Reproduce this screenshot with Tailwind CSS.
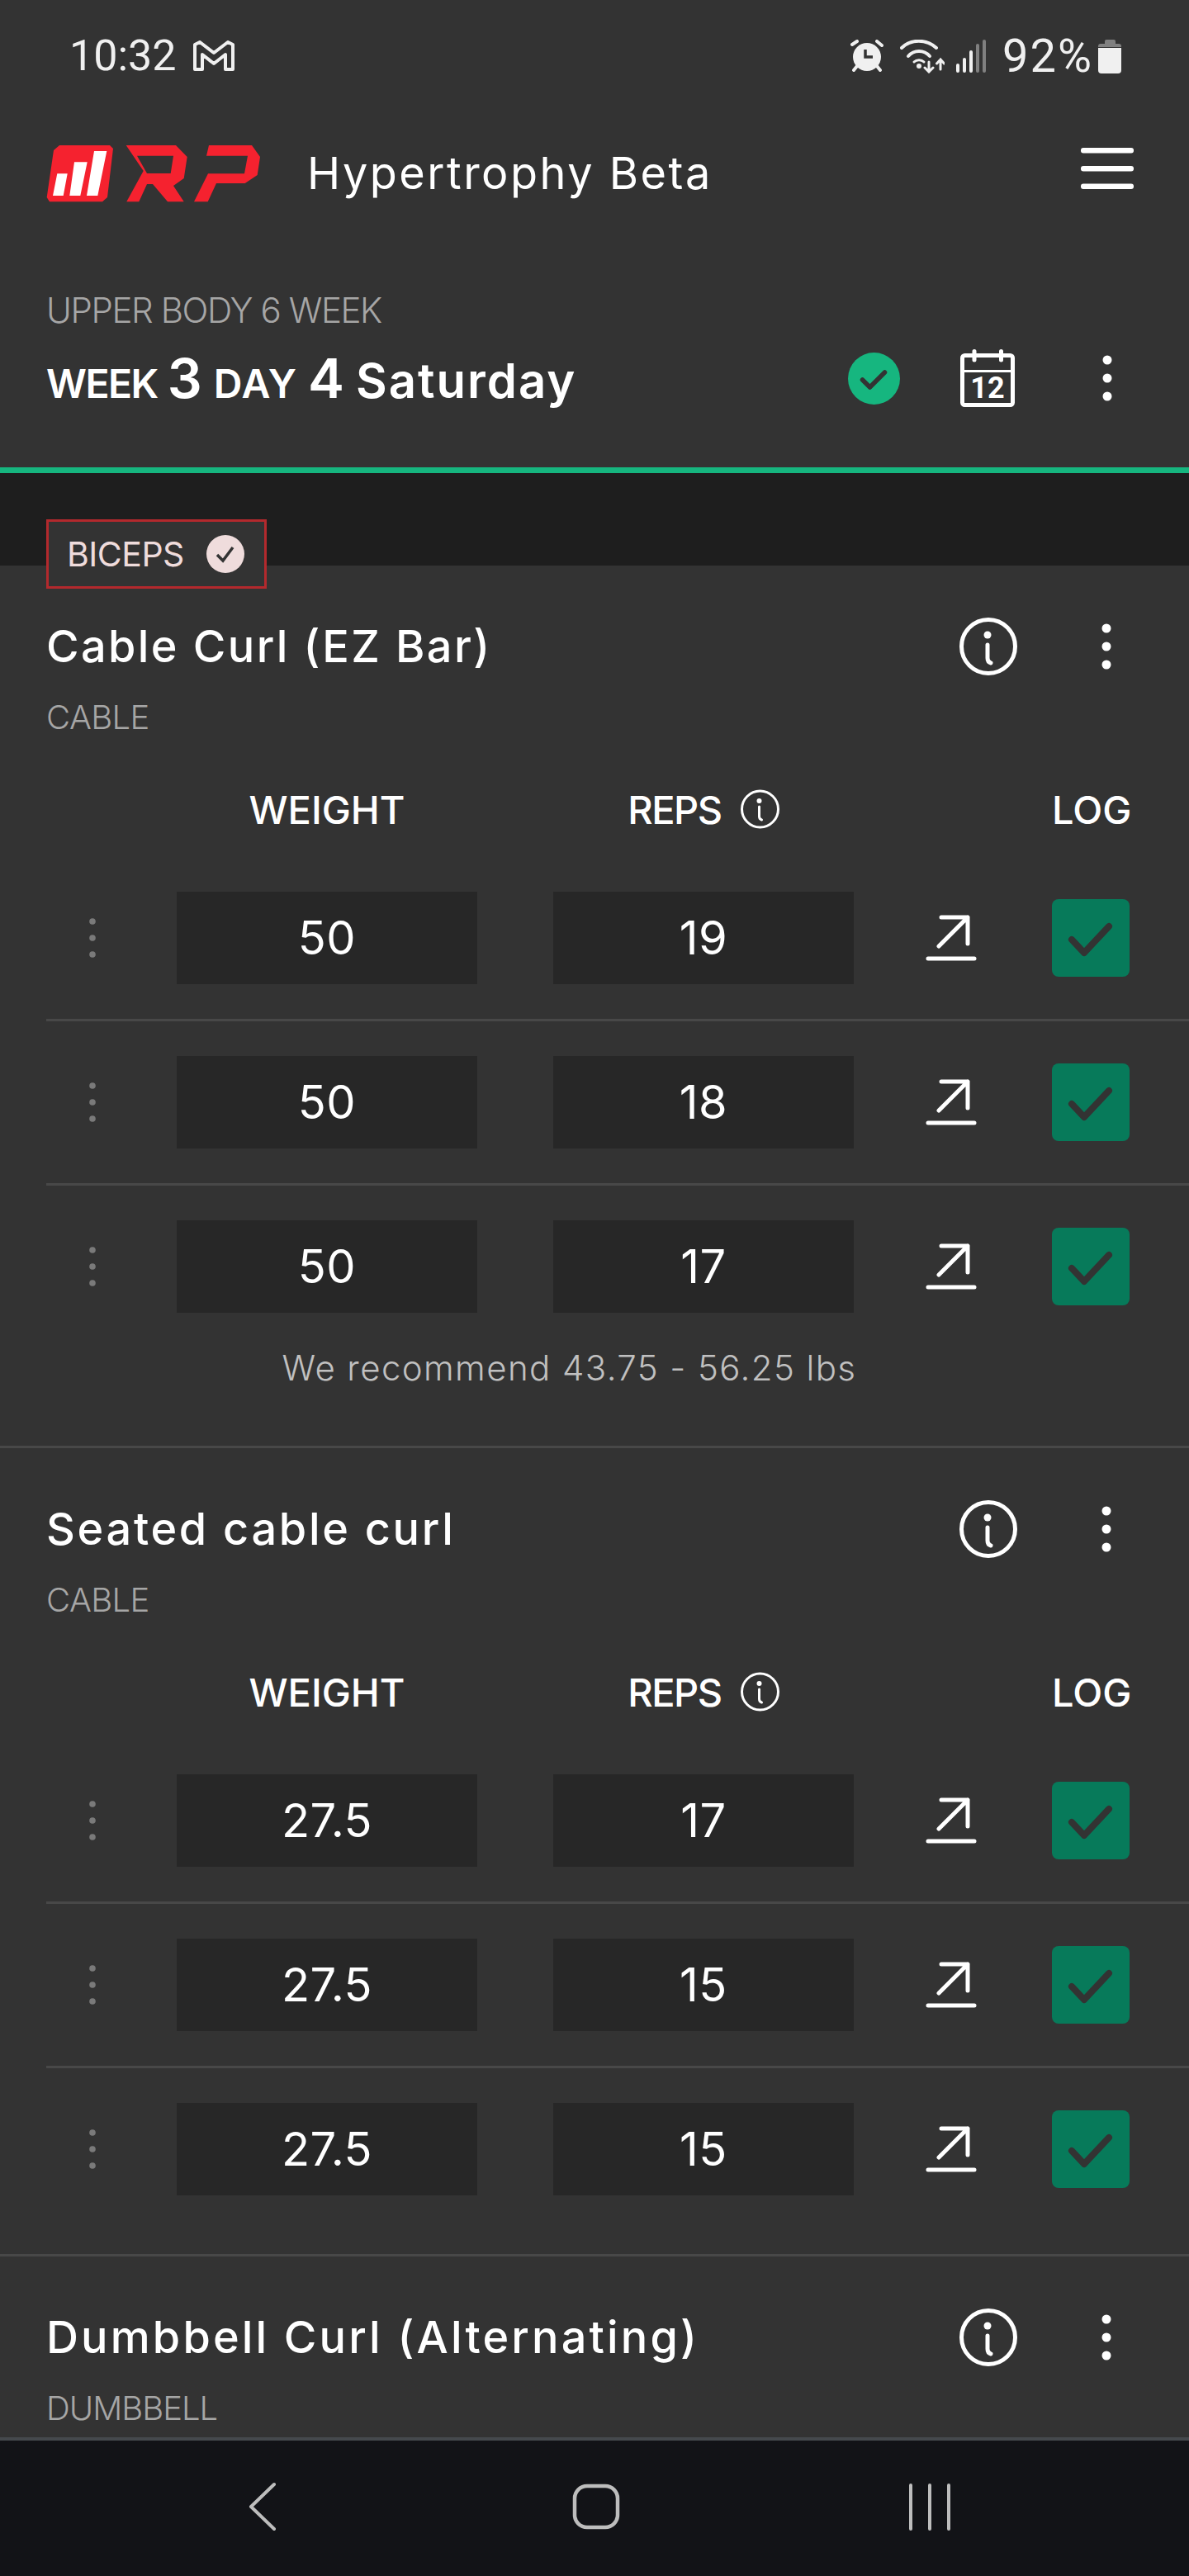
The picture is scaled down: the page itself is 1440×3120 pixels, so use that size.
<!DOCTYPE html>
<html lang="en">
<head>
  <meta charset="UTF-8" />
  <meta name="viewport" content="width=device-width, initial-scale=1" />
  <title>RP Hypertrophy Beta</title>
  <script src="https://cdn.jsdelivr.net/npm/@tailwindcss/browser@4"></script>
</head>
<body class="bg-[#333333] font-['Inter',sans-serif] text-white">

<!-- shared icons -->
<svg class="hidden">
  <symbol id="dots" viewBox="0 0 12 56"><circle cx="6" cy="6" r="5.5" fill="#fff"/><circle cx="6" cy="28" r="5.5" fill="#fff"/><circle cx="6" cy="50" r="5.5" fill="#fff"/></symbol>
  <symbol id="info" viewBox="0 0 70 70"><circle cx="35" cy="35" r="32.5" fill="none" stroke="#fff" stroke-width="5"/><circle cx="34" cy="21" r="4.5" fill="#fff"/><path d="M34 33 V49 Q34 54 38 55" fill="none" stroke="#fff" stroke-width="5" stroke-linecap="round"/></symbol>
  <symbol id="info-small" viewBox="0 0 47 48"><circle cx="23.5" cy="24" r="22" fill="none" stroke="#fff" stroke-width="3"/><circle cx="22.5" cy="14" r="3" fill="#fff"/><path d="M22.5 21 V33 Q22.500 36 25.500 37" fill="none" stroke="#fff" stroke-width="3" stroke-linecap="round"/></symbol>
  <symbol id="drag" viewBox="0 0 8 48"><circle cx="4" cy="4" r="3.800" fill="#7a7a7a"/><circle cx="4" cy="24" r="3.800" fill="#7a7a7a"/><circle cx="4" cy="44" r="3.800" fill="#7a7a7a"/></symbol>
  <symbol id="share" viewBox="0 0 62 56"><path d="M19 3 H51 V35 M51 3 L16 38 M3 53 H59" fill="none" stroke="#fff" stroke-width="5" stroke-linecap="round" stroke-linejoin="round"/></symbol>
  <symbol id="tick" viewBox="0 0 94 94"><path d="M24 49 L39 65 L69 33" fill="none" stroke="#333" stroke-width="8" stroke-linecap="round" stroke-linejoin="round"/></symbol>
</svg>

<div class="flex h-[3120px] w-[1440px] flex-col overflow-hidden bg-[#333333]">
  <main class="relative min-h-0 flex-1 overflow-hidden">

    <!-- status bar -->
    <div class="flex h-[136px] items-center justify-between pl-[84px] pr-[82px] text-[#f0f0f0]">
      <div class="flex items-center gap-[20px]">
        <span class="font-['Roboto',sans-serif] text-[52px] leading-none">10:32</span>
        <svg class="h-[38px] w-[50px]" viewBox="0 0 50 38" fill="none" stroke="currentColor" stroke-width="4" stroke-linejoin="round"><path d="M2 5 V35 H11 V17 L25 28 L39 17 V35 H48 V5 L42 2 L25 15 L8 2 Z"/></svg>
      </div>
      <div class="flex items-center">
        <svg class="h-[40px] w-[40px]" viewBox="0 0 40 40" fill="#f0f0f0"><circle cx="20" cy="21" r="17"/><path d="M2 6 L8 2 M32 2 L38 7 M4 37 L8 32 M36 37 L32 32" stroke="#f0f0f0" stroke-width="4" stroke-linecap="round"/><path d="M18 12 V21 H27" fill="none" stroke="#333" stroke-width="3.500"/></svg>
        <svg class="ml-[20px] h-[41px] w-[54px]" viewBox="0 0 54 41" fill="none" stroke="#f0f0f0" stroke-width="4" stroke-linecap="round"><path d="M2 10 C13 -1 32 -1 44 10"/><path d="M10 20 C17 12 29 12 36 20"/><path d="M17 27 C20 24 26 24 29 27" stroke-width="3"/><circle cx="23" cy="32" r="3" fill="#f0f0f0" stroke="none"/><path d="M35 27 V39 M30 34 L35 39 L40 34 M49 36 V24 M44.500 29 L49 24 L53.500 29" stroke-width="3"/></svg>
        <svg class="ml-[14px] h-[41px] w-[36px]" viewBox="0 0 36 41" fill="none" stroke-width="4" stroke-linecap="round"><path d="M2 38 V31 M10 38 V24 M18 38 V15" stroke="#f0f0f0"/><path d="M26 38 V7 M34 38 V2" stroke="#808080"/></svg>
        <span class="ml-[20px] font-['Roboto',sans-serif] text-[56px] leading-none tracking-[2px]">92%</span>
        <svg class="ml-[6px] h-[41px] w-[28px]" viewBox="0 0 28 41" fill="#f0f0f0"><path d="M8 2 A2 2 0 0 1 10 0 H19 A2 2 0 0 1 21 2 V5 H25 A3 3 0 0 1 28 8 V9 H0 V8 A3 3 0 0 1 3 5 H8 Z" fill="#808080"/><path d="M0 10 H28 V37 A4 4 0 0 1 24 41 H4 A4 4 0 0 1 0 37 Z"/></svg>
      </div>
    </div>

    <!-- app header -->
    <div class="flex h-[148px] items-center justify-between pl-[56px] pr-[67px]">
      <div class="flex items-center">
        <svg class="h-[70px] w-[260px]" viewBox="0 0 260 70" fill="#f5222f">
          <path d="M16 1 H77 L81 5 L74 64 L68 69.300 H4 L0.700 64 L9 7 Z"/>
          <path d="M13.300 35.300 H25.700 L20.700 62 H8 Z M34 21.300 H49.700 L41.300 62 H28.300 Z M58 8 H73.300 L62.300 62 H49 Z" fill="#fff"/>
          <path fill-rule="evenodd" d="M96.700 1 H157 L170.700 15 L166.700 41 L154 50 L166.700 69.300 H147 L129 48 H122 L112.300 69.300 H97.300 L117.700 32 Z M110 13.700 L122 35 H150.700 L154 13.700 Z"/>
          <path d="M197 1 H249 L259 15 L255.700 37 L240.700 47 H206 L195.700 69.300 H179 L196 35.300 H240 L244 13.700 H194 Z"/>
        </svg>
        <span class="ml-[56px] text-[54px] leading-none tracking-[2.500px]">Hypertrophy Beta</span>
      </div>
      <svg class="mb-[13px] h-[50px] w-[64px]" viewBox="0 0 64 50" fill="#fff"><rect width="64" height="6.500" y="0" rx="3"/><rect width="64" height="6.500" y="22" rx="3"/><rect width="64" height="6.500" y="43.500" rx="3"/></svg>
    </div>

    <!-- workout heading -->
    <div class="flex h-[282px] items-start justify-between pl-[56px] pr-[93px]">
      <div class="pt-[67px]">
        <div class="text-[42px] font-light leading-[50px] tracking-[-1.400px] text-[#a6a6a6]">UPPER BODY 6 WEEK</div>
        <div class="mt-[24px] flex items-baseline font-semibold leading-none">
          <span class="text-[48px] tracking-[-1.500px]">WEEK</span><span class="ml-[12px] text-[66px]">3</span><span class="ml-[14px] text-[48px] tracking-[1px]">DAY</span><span class="ml-[13px] text-[66px]">4</span><span class="ml-[14px] text-[58px] tracking-[2px]">Saturday</span>
        </div>
      </div>
      <div class="flex items-center pt-[139px]">
        <svg class="h-[63px] w-[63px]" viewBox="0 0 63 63"><circle cx="31.500" cy="31.500" r="31.500" fill="#16b67f"/><path d="M17.500 33 L26.500 42 L44.500 24" fill="none" stroke="#333" stroke-width="5.500" stroke-linecap="round" stroke-linejoin="round"/></svg>
        <svg class="ml-[73px] h-[70px] w-[66px]" viewBox="0 0 66 70" fill="none" stroke="#fff"><rect x="2.500" y="7.500" width="61" height="60" rx="3" stroke-width="5"/><path d="M2 26.500 H64" stroke-width="3"/><path d="M17 2.500 V13 M49.500 2.500 V13" stroke-width="5" stroke-linecap="round"/><text x="33" y="59" text-anchor="middle" font-family="Roboto, sans-serif" font-weight="700" font-size="36" fill="#fff" stroke="none">12</text></svg>
        <svg class="ml-[106px] h-[56px] w-[12px]"><use href="#dots"/></svg>
      </div>
    </div>

    <div class="h-[7px] bg-[#16b67f]"></div>
    <div class="h-[112px] bg-[#1e1e1e]"></div>

    <!-- muscle group badge -->
    <div class="absolute left-[56px] top-[629px] flex h-[84px] w-[267px] items-center border-[3px] border-[#b3292d] bg-[#333333] pl-[22px]">
      <span class="text-[41px] leading-none tracking-[-0.500px] text-[#efdcdc]">BICEPS</span>
      <svg class="ml-[27px] h-[46px] w-[46px]" viewBox="0 0 46 46"><circle cx="23" cy="23" r="23" fill="#efdcdc"/><path d="M13 24 L20 31 L32 15" fill="none" stroke="#333" stroke-width="3.500"/></svg>
    </div>

    <!-- cable curl -->
    <section class="border-b-[3px] border-[#484848] pb-[69px] pt-[62px]">
      <div class="flex h-[72px] items-center justify-between pl-[56px] pr-[94px]">
        <span class="text-[54px] font-medium leading-none tracking-[2.400px]">Cable Curl (EZ Bar)</span>
        <div class="flex items-center gap-[102px]">
          <svg class="h-[70px] w-[70px]"><use href="#info"/></svg>
          <svg class="h-[56px] w-[12px]"><use href="#dots"/></svg>
        </div>
      </div>
      <div class="mt-[25px] pl-[56px] text-[40px] font-light leading-[50px] tracking-[-0.600px] text-[#a6a6a6]">CABLE</div>
      <div class="mt-[56px] grid h-[60px] grid-cols-[158px_364px_92px_364px_240px_94px] items-center pl-[56px] text-[47px] font-medium leading-none">
        <span></span><span class="text-center">WEIGHT</span><span></span>
        <span class="flex items-center justify-center gap-[23px] tracking-[-1.500px]">REPS<svg class="h-[48px] w-[47px]"><use href="#info-small"/></svg></span>
        <span></span><span class="text-center">LOG</span>
      </div>
      <div class="mt-[28px]">
        <div class="ml-[56px] grid h-[199px] grid-cols-[158px_364px_92px_364px_240px_94px] items-center border-b-[3px] border-[#484848]">
          <svg class="ml-[52px] h-[48px] w-[8px]"><use href="#drag"/></svg>
          <div class="flex h-[112px] items-center justify-center bg-[#272727] text-[56px] leading-none tracking-[0.500px]">50</div><span></span>
          <div class="flex h-[112px] items-center justify-center bg-[#272727] text-[56px] leading-none tracking-[0.500px]">19</div>
          <svg class="ml-[87px] h-[56px] w-[62px]"><use href="#share"/></svg>
          <div class="h-[94px] rounded-[8px] bg-[#077a5a]"><svg class="h-[94px] w-[94px]"><use href="#tick"/></svg></div>
        </div>
        <div class="ml-[56px] grid h-[199px] grid-cols-[158px_364px_92px_364px_240px_94px] items-center border-b-[3px] border-[#484848]">
          <svg class="ml-[52px] h-[48px] w-[8px]"><use href="#drag"/></svg>
          <div class="flex h-[112px] items-center justify-center bg-[#272727] text-[56px] leading-none tracking-[0.500px]">50</div><span></span>
          <div class="flex h-[112px] items-center justify-center bg-[#272727] text-[56px] leading-none tracking-[0.500px]">18</div>
          <svg class="ml-[87px] h-[56px] w-[62px]"><use href="#share"/></svg>
          <div class="h-[94px] rounded-[8px] bg-[#077a5a]"><svg class="h-[94px] w-[94px]"><use href="#tick"/></svg></div>
        </div>
        <div class="ml-[56px] grid h-[196px] grid-cols-[158px_364px_92px_364px_240px_94px] items-center">
          <svg class="ml-[52px] h-[48px] w-[8px]"><use href="#drag"/></svg>
          <div class="flex h-[112px] items-center justify-center bg-[#272727] text-[56px] leading-none tracking-[0.500px]">50</div><span></span>
          <div class="flex h-[112px] items-center justify-center bg-[#272727] text-[56px] leading-none tracking-[0.500px]">17</div>
          <svg class="ml-[87px] h-[56px] w-[62px]"><use href="#share"/></svg>
          <div class="h-[94px] rounded-[8px] bg-[#077a5a]"><svg class="h-[94px] w-[94px]"><use href="#tick"/></svg></div>
        </div>
      </div>
      <div class="pr-[61px] text-center text-[42px] font-light leading-[50px] tracking-[1.400px] text-[#c0c0c0]">We recommend 43.75 - 56.25 lbs</div>
    </section>

    <!-- seated cable curl -->
    <section class="border-b-[3px] border-[#484848] pb-[29px] pt-[62px]">
      <div class="flex h-[72px] items-center justify-between pl-[56px] pr-[94px]">
        <span class="text-[54px] font-medium leading-none tracking-[2.700px]">Seated cable curl</span>
        <div class="flex items-center gap-[102px]">
          <svg class="h-[70px] w-[70px]"><use href="#info"/></svg>
          <svg class="h-[56px] w-[12px]"><use href="#dots"/></svg>
        </div>
      </div>
      <div class="mt-[25px] pl-[56px] text-[40px] font-light leading-[50px] tracking-[-0.600px] text-[#a6a6a6]">CABLE</div>
      <div class="mt-[56px] grid h-[60px] grid-cols-[158px_364px_92px_364px_240px_94px] items-center pl-[56px] text-[47px] font-medium leading-none">
        <span></span><span class="text-center">WEIGHT</span><span></span>
        <span class="flex items-center justify-center gap-[23px] tracking-[-1.500px]">REPS<svg class="h-[48px] w-[47px]"><use href="#info-small"/></svg></span>
        <span></span><span class="text-center">LOG</span>
      </div>
      <div class="mt-[28px]">
        <div class="ml-[56px] grid h-[199px] grid-cols-[158px_364px_92px_364px_240px_94px] items-center border-b-[3px] border-[#484848]">
          <svg class="ml-[52px] h-[48px] w-[8px]"><use href="#drag"/></svg>
          <div class="flex h-[112px] items-center justify-center bg-[#272727] text-[56px] leading-none tracking-[0.500px]">27.5</div><span></span>
          <div class="flex h-[112px] items-center justify-center bg-[#272727] text-[56px] leading-none tracking-[0.500px]">17</div>
          <svg class="ml-[87px] h-[56px] w-[62px]"><use href="#share"/></svg>
          <div class="h-[94px] rounded-[8px] bg-[#077a5a]"><svg class="h-[94px] w-[94px]"><use href="#tick"/></svg></div>
        </div>
        <div class="ml-[56px] grid h-[199px] grid-cols-[158px_364px_92px_364px_240px_94px] items-center border-b-[3px] border-[#484848]">
          <svg class="ml-[52px] h-[48px] w-[8px]"><use href="#drag"/></svg>
          <div class="flex h-[112px] items-center justify-center bg-[#272727] text-[56px] leading-none tracking-[0.500px]">27.5</div><span></span>
          <div class="flex h-[112px] items-center justify-center bg-[#272727] text-[56px] leading-none tracking-[0.500px]">15</div>
          <svg class="ml-[87px] h-[56px] w-[62px]"><use href="#share"/></svg>
          <div class="h-[94px] rounded-[8px] bg-[#077a5a]"><svg class="h-[94px] w-[94px]"><use href="#tick"/></svg></div>
        </div>
        <div class="ml-[56px] grid h-[196px] grid-cols-[158px_364px_92px_364px_240px_94px] items-center">
          <svg class="ml-[52px] h-[48px] w-[8px]"><use href="#drag"/></svg>
          <div class="flex h-[112px] items-center justify-center bg-[#272727] text-[56px] leading-none tracking-[0.500px]">27.5</div><span></span>
          <div class="flex h-[112px] items-center justify-center bg-[#272727] text-[56px] leading-none tracking-[0.500px]">15</div>
          <svg class="ml-[87px] h-[56px] w-[62px]"><use href="#share"/></svg>
          <div class="h-[94px] rounded-[8px] bg-[#077a5a]"><svg class="h-[94px] w-[94px]"><use href="#tick"/></svg></div>
        </div>
      </div>
    </section>

    <!-- dumbbell curl -->
    <section class="pt-[62px]">
      <div class="flex h-[72px] items-center justify-between pl-[56px] pr-[94px]">
        <span class="text-[54px] font-medium leading-none tracking-[3.150px]">Dumbbell Curl (Alternating)</span>
        <div class="flex items-center gap-[102px]">
          <svg class="h-[70px] w-[70px]"><use href="#info"/></svg>
          <svg class="h-[56px] w-[12px]"><use href="#dots"/></svg>
        </div>
      </div>
      <div class="mt-[25px] pl-[56px] text-[40px] font-light leading-[50px] tracking-[-1px] text-[#a6a6a6]">DUMBBELL</div>
    </section>
  </main>

  <!-- android nav bar -->
  <nav class="relative flex h-[168px] shrink-0 border-t-4 border-[#45494d] bg-[#121317]">
    <svg class="ml-[301px] mt-[50px] h-[60px] w-[36px]" viewBox="0 0 36 60" fill="none" stroke="#bdbdbd" stroke-width="4" stroke-linecap="round" stroke-linejoin="round"><path d="M32 3 L4 30 L32 57" transform="translate(-1 0)"/></svg>
    <svg class="ml-[355px] mt-[50px] h-[60px] w-[60px]" viewBox="0 0 60 60" fill="none" stroke="#bdbdbd" stroke-width="4.500"><rect x="4" y="5" width="52" height="50" rx="15"/></svg>
    <svg class="ml-[348px] mt-[50px] h-[60px] w-[54px]" viewBox="0 0 54 60" fill="none" stroke="#bdbdbd" stroke-width="4" stroke-linecap="round"><path d="M3 4 V57 M26 4 V57 M49 4 V57"/></svg>
  </nav>
</div>
</body>
</html>
